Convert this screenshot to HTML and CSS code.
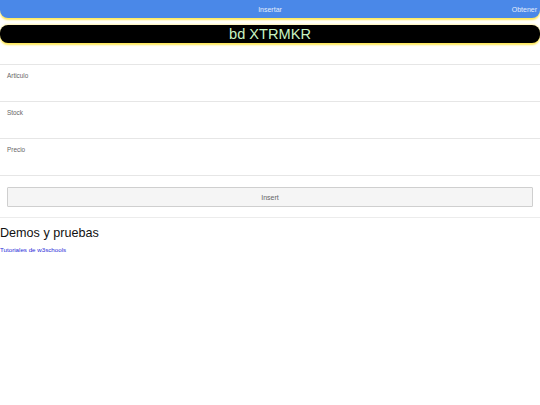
FILE: index.html
```html
<!DOCTYPE html>
<html>
<head>
<meta charset="utf-8">
<link rel="stylesheet" href="styles.css">
</head>
<body>
<nav class="topbar">
  <span></span>
  <a class="nav-item center">Insertar</a>
  <a class="nav-item right">Obtener</a>
</nav>
<header class="title">bd XTRMKR</header>
<form class="form">
  <div class="field"><label class="label">Articulo</label></div>
  <div class="field"><label class="label">Stock</label></div>
  <div class="field"><label class="label">Precio</label></div>
  <div class="actions"><button type="button" class="btn">Insert</button></div>
</form>
<section class="demos">
  <h2 class="demos-title">Demos y pruebas</h2>
  <a class="demos-link" href="#">Tutoriales de w3schools</a>
</section>
</body>
</html>
```
FILE: styles.css
```css
html, body {
  margin: 0;
  padding: 0;
  background: #fff;
  font-family: "Liberation Sans", Arial, sans-serif;
}
.topbar {
  height: 18px;
  background: #4a88e8;
  border-radius: 0 0 8px 8px;
  box-shadow: 0 2px 2px #ffe95a;
  display: grid;
  grid-template-columns: 1fr auto 1fr;
  align-items: center;
  font-size: 7px;
  color: #e3ecfb;
}
.nav-item.right {
  justify-self: end;
  padding-right: 3px;
}
.title {
  margin-top: 7px;
  height: 18px;
  line-height: 19px;
  background: #000;
  border-radius: 8px;
  box-shadow: 0 2px 2px #ffe95a, 0 -1px 2px #fff3b0;
  text-align: center;
  font-size: 14.6px;
  color: #c9f3c1;
}
.form {
  margin-top: 21px;
}
.field {
  border-top: 1px solid #e6e6e6;
  height: 36px;
  box-sizing: content-box;
  padding-left: 7px;
}
.label {
  display: block;
  padding-top: 7px;
  font-size: 6.4px;
  color: #666;
}
.actions {
  border-top: 1px solid #e6e6e6;
  border-bottom: 1px solid #ececec;
  padding: 11px 7px 10px;
}
.btn {
  display: block;
  width: 100%;
  height: 20px;
  margin: 0;
  background: #f5f5f5;
  border: 1px solid #cfcfcf;
  border-radius: 1px;
  font-family: "Liberation Sans", Arial, sans-serif;
  font-size: 7px;
  color: #666;
}
.demos-title {
  margin: 7px 0 0;
  font-size: 12.6px;
  font-weight: normal;
  line-height: 16px;
  color: #111;
}
.demos-link {
  display: block;
  margin-top: 5px;
  font-size: 6.2px;
  color: #2a2ad8;
  text-decoration: underline;
}
```
